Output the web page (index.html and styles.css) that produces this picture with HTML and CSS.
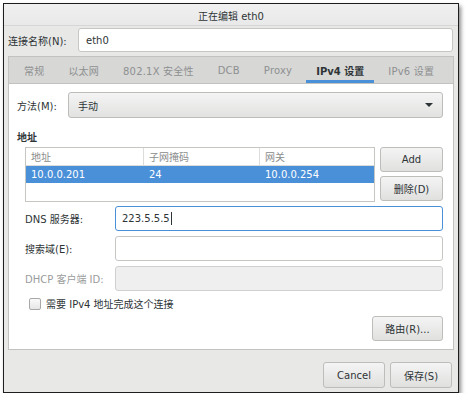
FILE: index.html
```html
<!DOCTYPE html>
<html lang="zh">
<head>
<meta charset="utf-8">
<link rel="stylesheet" href="styles.css">
</head>
<body>
<div class="window">
  <div class="titlebar">正在编辑 eth0</div>
  <div class="content">
    <div class="name-row">
      <span class="name-label">连接名称(N):</span>
      <div class="entry name-entry">eth0</div>
    </div>
    <div class="notebook">
      <div class="tabs">
        <span class="tab">常规</span>
        <span class="tab">以太网</span>
        <span class="tab">802.1X 安全性</span>
        <span class="tab">DCB</span>
        <span class="tab">Proxy</span>
        <span class="tab active">IPv4 设置</span>
        <span class="tab">IPv6 设置</span>
      </div>
      <div class="page">
        <div class="method-row">
          <span class="method-label">方法(M):</span>
          <div class="combo"><span>手动</span><span class="arrow"></span></div>
        </div>
        <div class="section-title">地址</div>
        <div class="addr-row">
          <div class="table">
            <div class="thead">
              <span class="col c1">地址</span>
              <span class="col c2">子网掩码</span>
              <span class="col c3">网关</span>
            </div>
            <div class="trow selected">
              <span class="col c1">10.0.0.201</span>
              <span class="col c2">24</span>
              <span class="col c3">10.0.0.254</span>
            </div>
          </div>
          <div class="side-buttons">
            <div class="btn">Add</div>
            <div class="btn">删除(D)</div>
          </div>
        </div>
        <div class="form">
          <span class="flabel">DNS 服务器:</span>
          <div class="entry focused">223.5.5.5<span class="caret"></span></div>
          <span class="flabel">搜索域(E):</span>
          <div class="entry"></div>
          <span class="flabel disabled">DHCP 客户端 ID:</span>
          <div class="entry off"></div>
        </div>
        <div class="check-row">
          <span class="checkbox"></span>
          <span>需要 IPv4 地址完成这个连接</span>
        </div>
        <div class="route-row">
          <div class="btn route-btn">路由(R)...</div>
        </div>
      </div>
    </div>
    <div class="actions">
      <div class="btn action-btn">Cancel</div>
      <div class="btn action-btn">保存(S)</div>
    </div>
  </div>
</div>
</body>
</html>
```
FILE: styles.css
```css
* { box-sizing: border-box; }
html, body { margin: 0; padding: 0; background: #ffffff; }
body {
  padding: 3px 0 0 3px;
  font-family: "DejaVu Sans", "Noto Sans CJK SC", sans-serif;
  font-size: 10px;
  color: #2e3436;
}
.window {
  width: 456px;
  height: 390px;
  border: 1px solid #1e1e1e;
  background: #e8e8e7;
  box-shadow: 2px 3px 4px rgba(0,0,0,0.45);
  display: flex;
  flex-direction: column;
}
.titlebar {
  height: 22px;
  flex: none;
  background: linear-gradient(#f0f0f0, #e9e9e9);
  border-bottom: 1px solid #d6d6d6;
  display: flex;
  align-items: center;
  justify-content: center;
  color: #2e3436;
  padding-top: 1px;
}
.content {
  flex: 1;
  display: flex;
  flex-direction: column;
  padding: 2px 4px 0 4px;
}
.name-row {
  display: flex;
  align-items: center;
  height: 24px;
}
.name-label { width: 70px; flex: none; }
.entry {
  height: 24px;
  background: #ffffff;
  border: 1px solid #c6c6c3;
  border-radius: 3px;
  display: flex;
  align-items: center;
  padding-left: 7px;
}
.name-entry { flex: 1; margin-right: 1px; }
.notebook {
  margin-top: 4px;
  border: 1px solid #c2c2c0;
  display: flex;
  flex-direction: column;
  height: 294px;
}
.tabs {
  height: 27px;
  flex: none;
  background: #d7d7d6;
  border-bottom: 1px solid #c2c2c0;
  display: flex;
  padding-left: 5px;
  gap: 4px;
}
.tab {
  padding: 0 10px;
  display: flex;
  align-items: center;
  color: #8e9090;
  letter-spacing: 0.2px;
}
.tab.active {
  color: #2e3436;
  font-weight: bold;
  letter-spacing: 0;
  box-shadow: inset 0 -3px 0 #4a90d9;
}
.page {
  flex: 1;
  background: #ffffff;
  padding: 8px 10px 0 8px;
  display: flex;
  flex-direction: column;
}
.method-row {
  display: flex;
  align-items: center;
  height: 26px;
}
.method-label { width: 51px; flex: none; }
.combo {
  flex: 1;
  height: 26px;
  border: 1px solid #bdbdba;
  border-radius: 3px;
  background: linear-gradient(#f4f4f4, #e2e2e1);
  display: flex;
  align-items: center;
  justify-content: space-between;
  padding: 0 9px 0 9px;
}
.arrow {
  width: 0; height: 0;
  border-left: 4px solid transparent;
  border-right: 4px solid transparent;
  border-top: 4px solid #2e3436;
}
.section-title {
  font-weight: bold;
  margin-top: 14px;
  height: 15px;
  line-height: 12px;
}
.addr-row {
  display: flex;
  gap: 5px;
  padding-left: 8px;
  height: 55px;
}
.table {
  width: 350px;
  border: 1px solid #c6c6c3;
  background: #ffffff;
}
.thead, .trow {
  display: flex;
  height: 17px;
  align-items: center;
}
.thead {
  color: #8a8c8c;
  border-bottom: 1px solid #dcdcdb;
  height: 18px;
}
.col { padding-left: 5px; height: 100%; display: flex; align-items: center; }
.c1 { width: 117px; }
.c2 { width: 116px; }
.c3 { flex: 1; }
.thead .c2, .thead .c3 { border-left: 1px solid #dcdcdb; }
.trow.selected { background: #4a90d9; color: #ffffff; }
.trow.selected .c2, .trow.selected .c3 { padding-left: 6px; }
.side-buttons {
  width: 63px;
  display: flex;
  flex-direction: column;
  gap: 4px;
}
.btn {
  height: 25px;
  border: 1px solid #bdbdba;
  border-radius: 3px;
  background: linear-gradient(#f4f4f4, #e0e0df);
  display: flex;
  align-items: center;
  justify-content: center;
  color: #2e3436;
}
.form {
  margin-top: 4px;
  padding-left: 8px;
  display: grid;
  grid-template-columns: 90px 1fr;
  row-gap: 5px;
  align-items: center;
}
.form .entry { height: 25px; }
.entry.focused { border-color: #4a90d9; padding-left: 6px; }
.caret {
  display: inline-block;
  width: 1px;
  height: 13px;
  background: #2e3436;
  margin-left: 1px;
}
.entry.off { background: #efefef; border-color: #d0d0ce; }
.flabel.disabled { color: #9a9c9c; }
.check-row {
  margin-top: 6px;
  padding-left: 12px;
  display: flex;
  align-items: center;
  gap: 5px;
  height: 13px;
}
.checkbox {
  width: 12px;
  height: 12px;
  border: 1px solid #a8a8a6;
  border-radius: 2px;
  background: linear-gradient(#fafafa, #e6e6e6);
}
.route-row {
  margin-top: 6px;
  display: flex;
  justify-content: flex-end;
}
.route-btn { width: 71px; }
.actions {
  margin-top: 12px;
  display: flex;
  justify-content: flex-end;
  gap: 5px;
  padding-right: 2px;
}
.action-btn { width: 62px; height: 26px; }
```
